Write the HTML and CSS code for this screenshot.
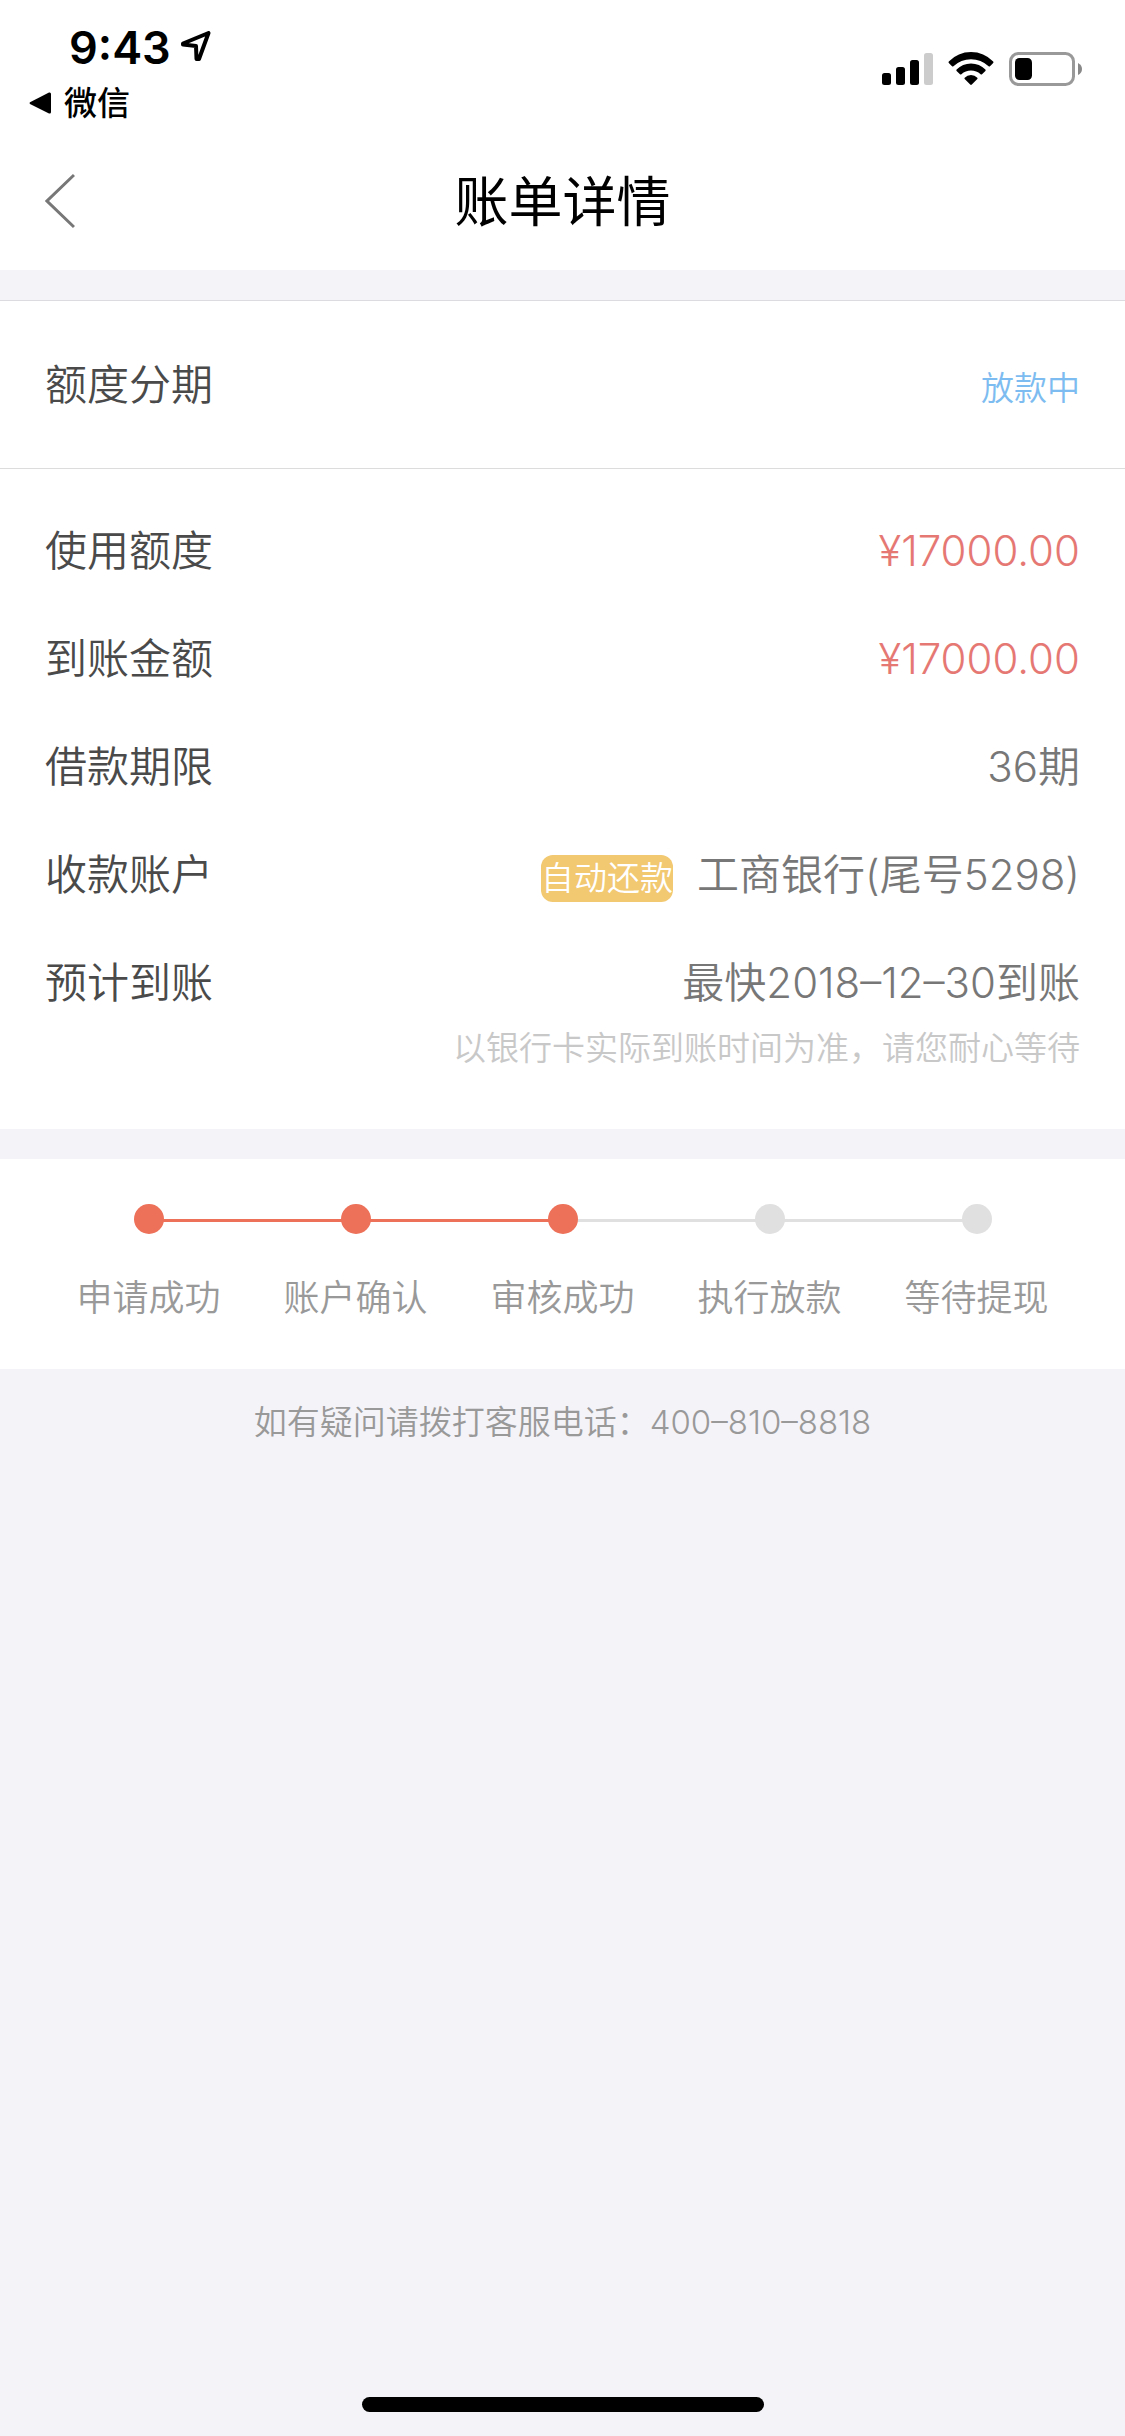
FILE: index.html
```html
<!DOCTYPE html>
<html lang="zh-CN">
<head>
<meta charset="utf-8">
<meta name="viewport" content="width=device-width, initial-scale=1">
<title>账单详情</title>
<link rel="stylesheet" href="styles.css">
</head>
<body>
<div class="page">
  <div class="status-bar">
    <div class="status-left">
      <div class="clock">
        <span>9:43</span>
        <svg class="location" width="30" height="30" viewBox="0 0 30 30" aria-hidden="true"><path d="M2 12.500 27.500 2 18 28 15.500 28 15 15 2 13.500Z" fill="none" stroke="#000" stroke-width="4" stroke-linejoin="round"/></svg>
      </div>
      <a class="return-app" href="#">
        <svg width="22" height="22" viewBox="0 0 22 22" aria-hidden="true"><path d="M1 10.200 20 .500Q22 0 22 2V20Q22 22 20 21.500L1 12Q0 11 1 10.200Z"/></svg>
        <span>微信</span>
      </a>
    </div>
    <div class="status-right">
      <svg width="51" height="34" viewBox="0 0 51 34" role="img" aria-label="信号">
        <rect x="0" y="21" width="9" height="12" rx="2.500"/>
        <rect x="14" y="15" width="9" height="18" rx="2.500"/>
        <rect x="28" y="8" width="9" height="25" rx="2.500"/>
        <rect x="42" y="1" width="9" height="32" rx="2.500" fill="#ccc"/>
      </svg>
      <svg width="46" height="34" viewBox="0 0 46 34" role="img" aria-label="无线网络">
        <path d="M.800 9.500Q10 0 23 0T45.200 9.500Q45.800 10.200 45.200 10.900L42 14.200Q41.300 14.800 40.600 14.200 33 7.200 23 7.200T5.400 14.200Q4.700 14.800 4 14.200L.800 10.900Q.200 10.200.800 9.500Z"/>
        <path d="M8.600 17.600Q14.500 11.500 23 11.500T37.400 17.600Q38 18.300 37.400 19L34 22.300Q33.300 22.900 32.600 22.300 28.500 18.600 23 18.600T13.400 22.300Q12.700 22.900 12 22.300L8.600 19Q8 18.300 8.600 17.600Z"/>
        <path d="M16.700 25.700Q19.200 23.100 23 23.100T29.300 25.700Q29.900 26.400 29.300 27.100L23.800 32.600Q23 33.300 22.200 32.600L16.700 27.100Q16.100 26.400 16.700 25.700Z"/>
      </svg>
      <svg width="74" height="34" viewBox="0 0 74 34" role="img" aria-label="电量">
        <rect x="1.500" y="1.500" width="63" height="31" rx="8" fill="none" stroke="#999" stroke-width="3"/>
        <rect x="6" y="6" width="17" height="22" rx="4.500"/>
        <path d="M69 11Q73 13 73 17T69 23Z" fill="#888"/>
      </svg>
    </div>
  </div>

  <header class="nav">
    <button class="back" type="button" aria-label="返回">
      <svg width="30" height="56" viewBox="0 0 30 56" aria-hidden="true"><path d="M29 2 2 28 29 54" fill="none" stroke="#777" stroke-width="3"/></svg>
    </button>
    <h1 class="title">账单详情</h1>
  </header>

  <main>
    <section class="panel bill">
      <div class="bill-head">
        <h2 class="label">额度分期</h2>
        <span class="state">放款中</span>
      </div>
      <dl class="details">
        <div class="row"><dt class="label">使用额度</dt><dd class="value money">¥17000.00</dd></div>
        <div class="row"><dt class="label">到账金额</dt><dd class="value money">¥17000.00</dd></div>
        <div class="row"><dt class="label">借款期限</dt><dd class="value">36期</dd></div>
        <div class="row"><dt class="label">收款账户</dt><dd class="value"><span class="tag">自动还款</span>工商银行(尾号5298)</dd></div>
        <div class="row"><dt class="label">预计到账</dt><dd class="value">最快2018–12–30到账</dd></div>
      </dl>
      <p class="note">以银行卡实际到账时间为准，请您耐心等待</p>
    </section>

    <ol class="panel steps">
      <li class="step done">申请成功</li>
      <li class="step done">账户确认</li>
      <li class="step done">审核成功</li>
      <li class="step">执行放款</li>
      <li class="step">等待提现</li>
    </ol>

    <p class="help">如有疑问请拨打客服电话：<a href="tel:400-810-8818">400–810–8818</a></p>
  </main>

  <div class="home-bar"></div>
</div>
</body>
</html>
```

FILE: styles.css
```css
* { box-sizing: border-box; }

body {
  margin: 0;
  background: #f4f3f8;
  color: #4a4a4a;
  font-family: Inter, "Noto Sans CJK SC", sans-serif;
  font-weight: 350;
}

h1, h2, p, dl, dd, ol { margin: 0; padding: 0; font-weight: inherit; }
a { color: inherit; text-decoration: none; }
svg { display: block; flex: none; }

.page {
  display: flex;
  flex-direction: column;
  min-height: 100vh;
}

.status-bar {
  display: flex;
  justify-content: space-between;
  height: 132px;
  padding: 20px 42px 0 29px;
  background: #fff;
  color: #000;
}

.clock {
  display: flex;
  align-items: center;
  gap: 10px;
  padding-left: 40px;
  font-size: 45px;
  font-weight: 600;
  line-height: 56px;
}

.location { margin-bottom: 4px; }

.return-app {
  display: flex;
  align-items: center;
  gap: 13px;
  font-size: 33px;
  font-weight: 500;
  line-height: 54px;
}

.status-right {
  display: flex;
  gap: 15px;
  padding-top: 32px;
}

.nav {
  display: grid;
  grid-template-columns: 1fr auto 1fr;
  align-items: center;
  height: 138px;
  padding: 0 45px;
  background: #fff;
}

.back {
  justify-self: start;
  padding: 0;
  border: 0;
  background: none;
}

.title {
  padding-top: 4px;
  color: #000;
  font-size: 54px;
  font-weight: 400;
  line-height: 80px;
}

.panel {
  margin-top: 30px;
  background: #fff;
}

.bill {
  padding-bottom: 60px;
  border-top: 1px solid #dcdce0;
}

.bill-head {
  display: flex;
  justify-content: space-between;
  align-items: baseline;
  padding: 52px 45px 48px;
  border-bottom: 1px solid #dcdcdc;
  line-height: 64px;
}

.label {
  color: #4a4a4a;
  font-size: 42px;
}

.state {
  color: #7dbcf0;
  font-size: 33px;
}

.details {
  display: flex;
  flex-direction: column;
  gap: 44px;
  padding: 50px 45px 0;
}

.row {
  display: flex;
  justify-content: space-between;
  align-items: baseline;
  line-height: 64px;
}

.value {
  color: #777;
  font-size: 42px;
}

.money { color: #e67874; }

.tag {
  display: inline-block;
  margin-right: 24px;
  border-radius: 12px;
  background: #f2c870;
  color: #fff;
  font-size: 33px;
  line-height: 47px;
}

.note {
  padding: 12px 45px 0;
  color: #c8c8c8;
  font-size: 33px;
  line-height: 42px;
  text-align: right;
}

.steps {
  display: grid;
  grid-template-columns: repeat(5, 1fr);
  padding: 45px 45px 46px;
  list-style: none;
}

.step {
  position: relative;
  display: flex;
  flex-direction: column;
  align-items: center;
  gap: 39px;
  color: #999;
  font-size: 36px;
  line-height: 50px;
}

.step::before {
  content: "";
  z-index: 1;
  width: 30px;
  height: 30px;
  border-radius: 50%;
  background: #e0e0e0;
}

/* connector back to the previous step */
.step + .step::after {
  content: "";
  position: absolute;
  top: 15px;
  right: 50%;
  width: 100%;
  height: 3px;
  background: #e0e0e0;
}

.step.done::before,
.step.done + .step.done::after { background: #ed7058; }

.help {
  padding: 28px 45px;
  color: #999;
  font-size: 33px;
  line-height: 50px;
  text-align: center;
}

.home-bar {
  width: 402px;
  height: 15px;
  margin: auto auto 24px;
  border-radius: 8px;
  background: #000;
}
```
